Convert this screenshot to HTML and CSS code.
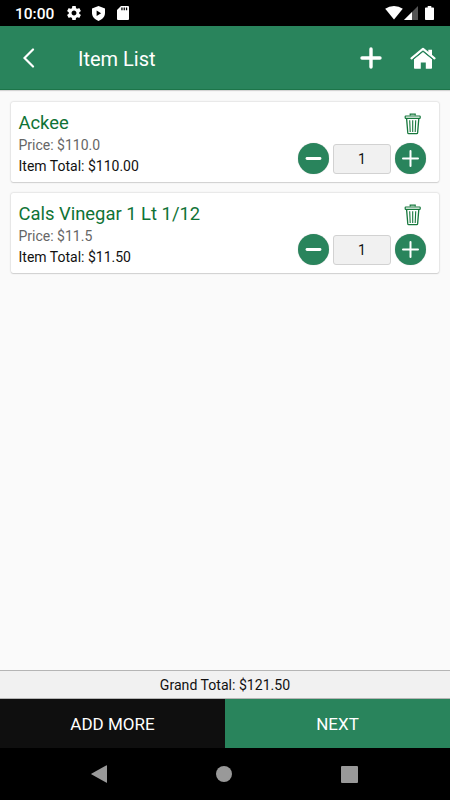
FILE: index.html
```html
<!DOCTYPE html>
<html lang="en">
<head>
    <meta charset="UTF-8">
    <meta name="viewport" content="width=device-width, initial-scale=1.0">
    <title>Item List</title>
    <link rel="stylesheet" href="styles.css">
</head>
<body>
    <svg class="sprite">
        <symbol id="trash" viewBox="0 0 18 22">
            <g fill="none" stroke="#16783c">
                <path d="M6.2 2.6V1.2h5v1.4" stroke-width="1.2"/>
                <rect x="1.2" y="3" width="15" height="2.3" rx=".6" stroke-width="1.2"/>
                <path d="M2.6 5.6l1.2 14.3q.1.8.9.8h8q.8 0 .9-.8L14.8 5.6" stroke-width="1.3"/>
                <path d="M5.7 7.3l.5 11.6M8.7 7.3v11.6M11.7 7.3l-.5 11.6" stroke-width="1.1"/>
            </g>
        </symbol>
    </svg>
    <div class="screen">
        <!-- status bar -->
        <div class="status">
            <span class="time">10:00</span>
            <svg class="gear" width="14" height="14" viewBox="2 2 20 20"><path fill="#fff" d="M19.43 12.98c.04-.32.07-.64.07-.98s-.03-.66-.07-.98l2.11-1.65c.19-.15.24-.42.12-.64l-2-3.46c-.12-.22-.39-.3-.61-.22l-2.49 1c-.52-.4-1.08-.73-1.69-.98l-.38-2.65C14.46 2.18 14.25 2 14 2h-4c-.25 0-.46.18-.49.42l-.38 2.65c-.61.25-1.17.59-1.69.98l-2.49-1c-.23-.09-.49 0-.61.22l-2 3.46c-.13.22-.07.49.12.64l2.11 1.65c-.04.32-.07.65-.07.98s.03.66.07.98l-2.11 1.65c-.19.15-.24.42-.12.64l2 3.46c.12.22.39.3.61.22l2.49-1c.52.4 1.08.73 1.69.98l.38 2.65c.03.24.24.42.49.42h4c.25 0 .46-.18.49-.42l.38-2.65c.61-.25 1.17-.59 1.69-.98l2.49 1c.23.09.49 0 .61-.22l2-3.46c.12-.22.07-.49-.12-.64l-2.11-1.65zM12 15.5c-1.93 0-3.5-1.57-3.5-3.5s1.57-3.5 3.5-3.5 3.5 1.57 3.5 3.5-1.57 3.5-3.5 3.5z"/></svg>
            <svg class="shield" width="13" height="15" viewBox="0 0 13 15"><path fill="#fff" d="M6.5 0L13 2.4v4.4C13 10.600 10.400 13.600 6.500 15 2.600 13.600 0 10.600 0 6.800V2.400z"/><path d="M4.600 4.400v5.600l4.500-2.800z"/></svg>
            <svg class="sd" width="12" height="14" viewBox="0 0 12 14"><path fill="#fff" d="M4 0h7q1 0 1 1v12q0 1-1 1H1q-1 0-1-1V4z"/><path d="M4.300 1.600h1.300v2.700H4.300zM6.600 1.600h1.300v2.700H6.600zM8.900 1.600h1.300v2.700H8.900z"/></svg>
            <svg class="wifi" width="18" height="14" viewBox="0 0 18 14"><path fill="#fff" d="M9 13.500L.2 2.800Q4 0 9 0t8.800 2.800z"/></svg>
            <svg class="signal" width="14" height="14" viewBox="0 0 14 14"><path fill="#555" d="M14 0v14H0z"/><path fill="#fff" d="M8 6v8H0z"/></svg>
            <svg class="battery" width="9" height="14" viewBox="0 0 9 14"><path fill="#fff" d="M2.700 0h3.600v1.400h1.900q.8 0 .8.800v11q0 .8-.8.800H.8q-.8 0-.8-.8v-11q0-.8.8-.8h1.900z"/></svg>
        </div>

        <div class="header">
            <svg class="back" width="12" height="20" viewBox="0 0 12 20"><path d="M10 1.500L1.500 10l8.500 8.500" fill="none" stroke="#fff" stroke-width="2.200" stroke-linecap="round"/></svg>
            <h1>Item List</h1>
            <svg class="add" width="22" height="22" viewBox="0 0 22 22"><path d="M11 2v18M2 11h18" stroke="#fff" stroke-width="3.400" stroke-linecap="round"/></svg>
            <svg class="home" width="26" height="22" viewBox="0 0 26 22">
                <path d="M1.500 11.300L13 1.800l11.500 9.500" fill="none" stroke="#fff" stroke-width="2.200" stroke-linecap="round" stroke-linejoin="round"/>
                <path d="M18.300 2.800H22v6l-3.700-3z" fill="#fff"/>
                <path d="M4 12.200L13 4.900l9 7.300V21q0 .8-.8.800h-5.400V15.500h-5v6.300H4.800q-.8 0-.8-.8z" fill="#fff"/>
                <path d="M3 12.300L13 4.100l10 8.200" fill="none" stroke="#29845c" stroke-width="1"/>
            </svg>
        </div>

        <div class="list">
            <div class="card">
                <div class="info">
                    <h2>Ackee</h2>
                    <p class="price">Price: $110.0</p>
                    <p class="total">Item Total: $110.00</p>
                </div>
                <div class="actions">
                    <svg class="trash"><use href="#trash"/></svg>
                    <div class="qty">
                        <svg class="round" viewBox="0 0 31 31"><path d="M9 15.500h13" stroke-width="2.800"/></svg>
                        <span class="num">1</span>
                        <svg class="round" viewBox="0 0 31 31"><path d="M8 15.500h15M15.500 8v15" stroke-width="2"/></svg>
                    </div>
                </div>
            </div>
            <div class="card">
                <div class="info">
                    <h2>Cals Vinegar 1 Lt 1/12</h2>
                    <p class="price">Price: $11.5</p>
                    <p class="total">Item Total: $11.50</p>
                </div>
                <div class="actions">
                    <svg class="trash"><use href="#trash"/></svg>
                    <div class="qty">
                        <svg class="round" viewBox="0 0 31 31"><path d="M9 15.500h13" stroke-width="2.800"/></svg>
                        <span class="num">1</span>
                        <svg class="round" viewBox="0 0 31 31"><path d="M8 15.500h15M15.500 8v15" stroke-width="2"/></svg>
                    </div>
                </div>
            </div>
        </div>

        <div class="grand">Grand Total: $121.50</div>
        <div class="buttons">
            <button class="more">ADD MORE</button>
            <button class="next">NEXT</button>
        </div>

        <!-- android navigation -->
        <div class="nav">
            <svg width="16" height="18" viewBox="0 0 16 18"><path fill="#999" d="M16 .5v17q0 .5-.5.300L.300 9.300q-.4-.3 0-.6L15.500.200q.5-.2.500.300z"/></svg>
            <svg width="16" height="16" viewBox="0 0 16 16"><circle cx="8" cy="8" r="8" fill="#999"/></svg>
            <svg width="17" height="17" viewBox="0 0 17 17"><rect width="17" height="17" rx="1" fill="#999"/></svg>
        </div>
    </div>
</body>
</html>
```

FILE: styles.css
```css
* {
    box-sizing: border-box;
}
body {
    margin: 0;
    font-family: Roboto, "Liberation Sans", sans-serif;
    color: #111;
}
h1, h2, p {
    margin: 0;
    font-weight: 400;
}
svg {
    display: block;
    flex-shrink: 0;
}
.sprite {
    display: none;
}
.screen {
    display: flex;
    flex-direction: column;
    height: 800px;
    background: #fafafa;
}
.status {
    display: flex;
    align-items: center;
    height: 26px;
    padding: 0 16px 0 15px;
    background: #000;
    color: #fff;
}
.time {
    width: 52px;
    font-size: 15.500px;
    font-weight: 500;
    line-height: 26px;
    padding-top: 2px;
}
.shield {
    margin-left: 11px;
}
.sd {
    margin-left: 12px;
}
.wifi {
    margin-left: auto;
}
.signal {
    margin-left: 1px;
}
.battery {
    margin-left: 7px;
}
.header {
    display: flex;
    align-items: center;
    height: 64px;
    padding: 1px 14px 0 23px;
    background: #29845c;
    border-bottom: 1px solid #1c7549;
    box-shadow: 0 1px 1px rgba(0, 0, 0, .15);
    color: #fff;
}
.header h1 {
    flex: 1;
    margin-left: 43px;
    font-size: 20px;
    line-height: 24px;
    padding-top: 1px;
}
.home {
    margin-left: 28px;
}
.list {
    flex: 1;
    display: flex;
    flex-direction: column;
    gap: 11px;
    padding: 12px 11px 0;
}
.card {
    display: flex;
    justify-content: space-between;
    height: 80px;
    padding: 8px 13px 0 7.500px;
    border-radius: 2px;
    background: #fff;
    box-shadow: 0 0 2px rgba(0, 0, 0, .25), 0 1px 1px rgba(0, 0, 0, .1);
}
.info h2 {
    font-size: 18.400px;
    line-height: 25px;
    color: #0f7336;
}
.info p {
    font-size: 14px;
    line-height: 20px;
}
.info .price {
    margin-bottom: 1px;
    color: #666;
}
.actions {
    display: flex;
    flex-direction: column;
    align-items: flex-end;
}
.trash {
    width: 18px;
    height: 22px;
    margin: 2.500px 4px 0 0;
}
.qty {
    display: flex;
    align-items: center;
    gap: 4px;
    margin-top: 8.500px;
}
.round {
    width: 31px;
    height: 31px;
    border-radius: 50%;
    background: #29845c;
    box-shadow: 0 0 1px rgba(0, 0, 0, .3);
    stroke: #fff;
    stroke-linecap: round;
}
.num {
    width: 58px;
    height: 30px;
    border: 1px solid #d2d2d2;
    border-radius: 3px;
    background: #f1f1f1;
    font-size: 14px;
    line-height: 29px;
    text-align: center;
}
.grand {
    height: 29px;
    border-top: 1px solid #b5b5b5;
    border-bottom: 1px solid #b5b5b5;
    background: #f1f1f1;
    font-size: 14.100px;
    line-height: 29px;
    text-align: center;
}
.buttons {
    display: flex;
    height: 49px;
}
.buttons button {
    flex: 1;
    border: none;
    padding: 0;
    font-family: inherit;
    font-size: 17px;
    color: #fff;
}
.more {
    background: #0f0f0f;
}
.next {
    background: #29845c;
}
.nav {
    display: flex;
    align-items: center;
    justify-content: space-between;
    height: 52px;
    padding: 0 92px 0 91px;
    background: #000;
}
```
